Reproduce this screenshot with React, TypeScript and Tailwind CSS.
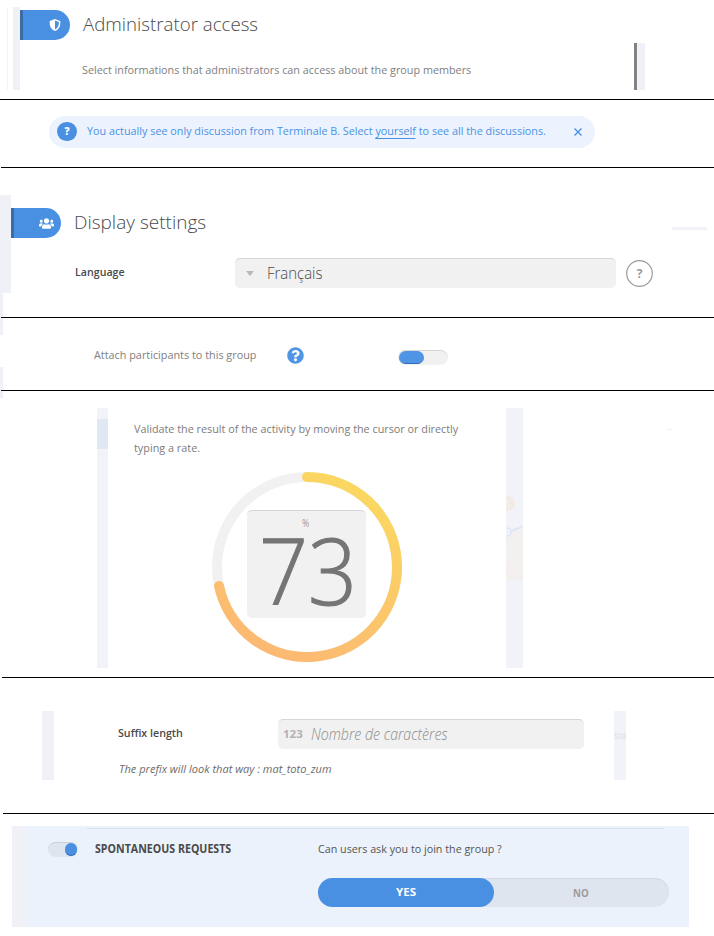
import { useLayoutEffect, useRef, useState } from 'react';
import type { ReactNode } from 'react';
import { FaQuestionCircle, FaUsers } from 'react-icons/fa';

/* One line of text squeezed horizontally to the width of its box. */
function Line({ className, children }: { className: string; children: ReactNode }) {
  const box = useRef<HTMLDivElement>(null);
  const text = useRef<HTMLSpanElement>(null);
  const [scale, setScale] = useState(1);
  useLayoutEffect(() => {
    if (box.current && text.current) {
      setScale(box.current.clientWidth / text.current.offsetWidth);
    }
  }, []);
  return (
    <div ref={box} className={`shrink-0 whitespace-nowrap ${className}`}>
      <span ref={text} className="inline-block origin-left" style={{ transform: `scaleX(${scale})` }}>
        {children}
      </span>
    </div>
  );
}

function Rule({ lead }: { lead: string }) {
  return (
    <div className="flex h-px">
      <div className={lead} />
      <div className="flex-1 bg-black" />
    </div>
  );
}

function Tab({ children }: { children: ReactNode }) {
  return (
    <div className="flex h-[30px] w-[50px] shrink-0 items-center justify-end rounded-r-full border-l-[3px] border-[#3a6da6] bg-[#4a90e2] text-white">
      {children}
    </div>
  );
}

function Dial() {
  return (
    <div className="relative ml-[78px] mt-[15px] h-[190px] w-[190px]">
      <svg viewBox="0 0 190 190" className="h-full w-full" fill="none" strokeWidth="10">
        <defs>
          <linearGradient id="rate" x1="120" y1="5" x2="30" y2="185" gradientUnits="userSpaceOnUse">
            <stop offset="0" stopColor="#fbd761" />
            <stop offset="1" stopColor="#fcb674" />
          </linearGradient>
        </defs>
        <circle cx="95" cy="95" r="90" stroke="#f1f1f1" />
        <path d="M95 5A90 90 0 1 1 7 114" stroke="url(#rate)" strokeLinecap="round" />
      </svg>
      <div className="absolute left-[35px] top-[38px] flex h-[108px] w-[119px] flex-col items-center rounded-[5px] border-t border-[#d6d6d6] bg-[#f1f1f1]">
        <Line className="mr-[2px] mt-[6px] h-3 w-[7px] text-[10px] leading-3 text-[#999]">%</Line>
        <Line className="ml-[3px] mt-[3px] h-[76px] w-[98px] text-[92px] font-light leading-[76px] text-[#757575] [-webkit-text-stroke:1.2px_#757575]">73</Line>
      </div>
    </div>
  );
}

export default function App() {
  return (
    <div className="h-[936px] w-[714px] overflow-hidden bg-white font-['Open_Sans',sans-serif] text-[11.500px] text-[#4a4a4a]">
      <section className="flex h-[99px] items-start">
        <div className="ml-[7px] mt-[7px] h-[83px] w-px bg-[#f3f3f7]" />
        <div className="ml-[5px] mt-[7px] h-[83px] w-[7px] bg-[#f0f1f7]" />
        <div className="mt-[10px]">
          <Tab>
            <svg viewBox="0 0 12 12" className="mr-[9px] h-3 w-3">
              <path d="M6 0 11.3 2v2.7C11.3 8.200 8.800 10.900 6 12 3.200 10.900.7 8.200.7 4.700V2Z" fill="white" />
              <path d="M6 1.600 9.800 3v1.800C9.800 7.400 8 9.400 6 10.400Z" fill="#4a90e2" />
            </svg>
          </Tab>
        </div>
        <div className="ml-3">
          <Line className="ml-px mt-[10px] h-[28px] w-[175px] text-[19px] font-light leading-[28px]">Administrator access</Line>
          <Line className="mt-[24px] h-4 w-[389px] leading-4 text-[#808080]">
            Select informations that administrators can access about the group members
          </Line>
        </div>
        <div className="ml-[163px] mt-[43px] h-[47px] w-[11px] border-l-[3px] border-[#828282] bg-[#f0f1f8]" />
      </section>
      <Rule lead="w-0" />

      <section className="flex h-[67px] items-start pl-[49px] pt-4">
        <div className="flex h-8 w-[546px] items-center rounded-full bg-[#ecf3fe] pl-2 text-[#4a92e3]">
          <div className="mb-px flex h-[19px] w-5 items-center justify-center rounded-full bg-[#4a90e2] text-[10px] font-extrabold text-white">?</div>
          <Line className="mb-[3px] ml-[10px] w-[459px] leading-4">
            You actually see only discussion from Terminale B. Select{' '}
            <a className="inline-block border-b border-[#4a90e2] leading-[14px]">yourself</a> to see all the discussions.
          </Line>
          <svg viewBox="0 0 8 8" className="ml-7 h-2 w-2" stroke="#4a90e2" strokeWidth="1.400">
            <path d="M.5.5 7.500 7.500M7.500.5.5 7.500" />
          </svg>
        </div>
      </section>
      <Rule lead="w-px bg-white" />

      <section className="flex h-[149px] items-start">
        <div className="mt-[27px] w-[11px]">
          <div className="h-[98px] bg-[#f0f1f7]" />
          <div className="h-6 w-[3px] bg-[#f0f1f7]" />
        </div>
        <div className="mt-10">
          <Tab>
            <FaUsers className="mr-[7.500px] h-[15px] w-[15px]" />
          </Tab>
        </div>
        <div className="ml-[13px] mt-10">
          <div className="flex h-[30px] items-center">
            <Line className="mb-[2px] w-[132px] text-[19px] font-light leading-[28px]">Display settings</Line>
            <div className="ml-[466px] mt-[11px] h-[3px] w-[35px] bg-[#f2f3f8]" />
          </div>
          <div className="mt-5 flex h-[30px] items-center">
            <Line className="ml-px mb-[3px] w-[50px] font-semibold">Language</Line>
            <div className="ml-[110px] flex h-[30px] w-[381px] items-center rounded-[5px] border-t border-[#d6d6d6] bg-[#f1f1f1] pl-[11px]">
              <div className="h-0 w-0 border-x-[4.500px] border-t-[5px] border-x-transparent border-t-[#bcb8b8]" />
              <Line className="mb-[2px] ml-[13px] w-[55px] text-[15.500px] font-light leading-5">Français</Line>
            </div>
            <svg viewBox="0 0 27 27" className="ml-[10px] h-[27px] w-[27px]">
              <circle cx="13.500" cy="13.500" r="12.800" fill="none" stroke="#9b9b9b" strokeWidth="1.200" />
              <text x="13.500" y="18" textAnchor="middle" fill="#9b9b9b" className="text-xs font-bold">?</text>
            </svg>
          </div>
        </div>
      </section>
      <Rule lead="w-px bg-[#f0f1f7]" />

      <section className="flex h-[72px] items-start">
        <div className="w-[94px]">
          <div className="h-[17px] w-[3px] bg-[#f0f1f7]" />
          <div className="mt-8 h-[23px] w-[3px] bg-[#f0f1f7]" />
        </div>
        <Line className="mt-[29px] w-[162px] leading-4 text-[#808080]">Attach participants to this group</Line>
        <FaQuestionCircle className="ml-[31px] mt-[29px] h-[17px] w-[17px] text-[#5095e5]" />
        <div className="ml-[94px] mt-8 h-[15px] w-[50px] rounded-full border-t border-[#d6d6d6] bg-[#f1f1f1] pl-px">
          <div className="h-[13px] w-[25px] rounded-full border-b border-[#2f6db8] bg-[#5095e5]" />
        </div>
      </section>
      <Rule lead="w-px bg-[#f0f1f7]" />

      <section className="flex h-[286px] items-start">
        <div className="w-[3px] self-start">
          <div className="h-[7px] bg-[#f0f1f7]" />
        </div>
        <div className="ml-[94px] mt-[17px] h-[260px] w-[11px] bg-[#f1f3f8] pt-[11px]">
          <div className="h-[30px] bg-[#e0e7f5]" />
        </div>
        <div className="ml-[26px] mt-[28px] w-[372px] leading-[19px] text-[#7c7c7c]">
          <Line className="h-[19px] w-[324px]">Validate the result of the activity by moving the cursor or directly</Line>
          <Line className="h-[19px] w-[66px]">typing a rate.</Line>
          <Dial />
        </div>
        <svg viewBox="0 0 17 260" className="mt-[17px] h-[260px] w-[17px] bg-[#f1f3f8]">
          <circle cx="1.500" cy="95.500" r="7.500" fill="#f3eae3" />
          <path d="M0 93 3 94M0 98 4 98M2 92 0 96" stroke="#f8f3ef" fill="none" />
          <path d="M0 124 17 119V153H0Z" fill="#f2f1ef" />
          <path d="M0 153H17V172H0Z" fill="#f3efee" />
          <path d="M5 123 17 118.500" stroke="#dde7f7" strokeWidth="2" />
          <circle cx="1.200" cy="124" r="4" fill="#f1f3f8" stroke="#dde7f7" strokeWidth="1.500" />
        </svg>
        <div className="ml-[143px] mt-[38px] h-px w-[6px] bg-[#f2f2f5]" />
      </section>
      <Rule lead="w-[2px] bg-white" />

      <section className="flex h-[135px] items-start pl-[42px] pt-[33px]">
        <div className="h-[69px] w-3 bg-[#f0f1f7]" />
        <div className="ml-16 mt-2 w-[466px]">
          <div className="flex h-[30px] items-center">
            <Line className="mb-[2px] w-[65px] font-semibold">Suffix length</Line>
            <div className="ml-[95px] flex h-[30px] w-[306px] items-center rounded-[5px] border-t border-[#d6d6d6] bg-[#f1f1f1] pl-[5px]">
              <Line className="w-5 text-[11px] font-bold text-[#b3b3b3]">123</Line>
              <Line className="mb-[2px] ml-2 w-[137px] text-[15.500px] font-light italic leading-5 text-[#8c8c8c]">Nombre de caractères</Line>
            </div>
          </div>
          <Line className="ml-px mt-3 w-[213px] italic leading-4 text-[#6c6c6c]">The prefix will look that way : mat_toto_zum</Line>
        </div>
        <div className="ml-[30px] h-[69px] w-3 overflow-hidden bg-[#f1f3f8] pt-[17px]">
          <Line className="w-3 text-[9px] font-bold leading-4 text-[#e2e4ea]">StG</Line>
        </div>
      </section>
      <Rule lead="w-[3px] bg-white" />

      <section className="flex h-[122px] items-start pl-3 pt-3">
        <div className="h-[101px] w-[677px] border-l-[16px] border-[#eff1f7] bg-[#ebf2fc] pt-[2px]">
          <div className="ml-[59px] h-px w-[577px] bg-[#d9e2ee]" />
          <div className="flex items-start pl-5">
            <div className="mt-[13px] flex h-[15px] w-[30px] justify-end rounded-full border-t border-[#c9d0da] bg-[#dfe5ee] pr-px">
              <div className="h-[13px] w-3 rounded-full border-b border-[#2f6db8] bg-[#4a90e2]" />
            </div>
            <Line className="ml-[17px] mt-3 w-[136px] font-bold leading-4">SPONTANEOUS REQUESTS</Line>
            <div className="ml-[87px] mt-3">
              <Line className="w-[184px] leading-4 text-[#555]">Can users ask you to join the group ?</Line>
              <div className="mt-[21px] flex h-[29px] w-[351px] rounded-full bg-[#dfe5ee] text-[11px] font-bold shadow-[inset_0_1px_0_#d0d7e2]">
                <div className="flex w-[175.500px] items-center justify-center rounded-full bg-[#4a90e2] pb-px text-white">
                  <Line className="w-5">YES</Line>
                </div>
                <div className="flex flex-1 items-center justify-center pt-px text-[#9b9b9b]">
                  <Line className="w-4">NO</Line>
                </div>
              </div>
            </div>
          </div>
        </div>
      </section>
    </div>
  );
}
